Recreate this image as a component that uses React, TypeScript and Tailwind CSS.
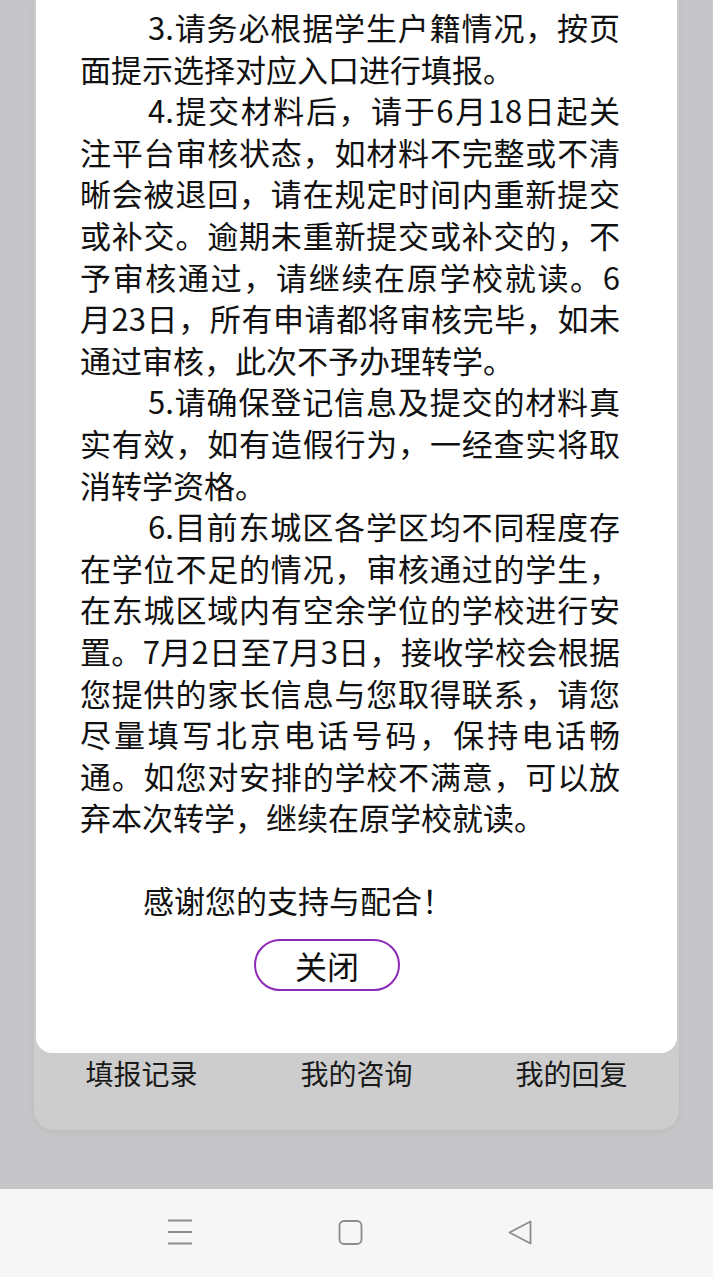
import React from 'react';

type Line = { text: string; indent?: boolean; last?: boolean };

const lines: Line[] = [
  { text: '3.请务必根据学生户籍情况，按页', indent: true },
  { text: '面提示选择对应入口进行填报。', last: true },
  { text: '4.提交材料后，请于6月18日起关', indent: true },
  { text: '注平台审核状态，如材料不完整或不清' },
  { text: '晰会被退回，请在规定时间内重新提交' },
  { text: '或补交。逾期未重新提交或补交的，不' },
  { text: '予审核通过，请继续在原学校就读。6' },
  { text: '月23日，所有申请都将审核完毕，如未' },
  { text: '通过审核，此次不予办理转学。', last: true },
  { text: '5.请确保登记信息及提交的材料真', indent: true },
  { text: '实有效，如有造假行为，一经查实将取' },
  { text: '消转学资格。', last: true },
  { text: '6.目前东城区各学区均不同程度存', indent: true },
  { text: '在学位不足的情况，审核通过的学生，' },
  { text: '在东城区域内有空余学位的学校进行安' },
  { text: '置。7月2日至7月3日，接收学校会根据' },
  { text: '您提供的家长信息与您取得联系，请您' },
  { text: '尽量填写北京电话号码，保持电话畅' },
  { text: '通。如您对安排的学校不满意，可以放' },
  { text: '弃本次转学，继续在原学校就读。', last: true },
];

function NavBar() {
  return (
    <div className="h-[88px] bg-[#f6f6f6] flex items-center justify-center pr-[13px] pb-[2px]">
      <div className="flex items-center gap-[145px]">
        <svg width="26" height="26" viewBox="0 0 26 26" fill="none" stroke="#8c8c8c" strokeWidth="1.8">
          <path d="M1 1.5h24M1 13h24M1 24.5h24" />
        </svg>
        <svg width="25" height="25" viewBox="0 0 25 25" fill="none" stroke="#8c8c8c" strokeWidth="1.8">
          <rect x="1.5" y="1" width="22" height="23" rx="4.5" />
        </svg>
        <svg width="25" height="25" viewBox="0 0 25 25" fill="none" stroke="#8c8c8c" strokeWidth="1.8" strokeLinejoin="round">
          <path d="M22.5 1.5v22L1.5 12.5z" />
        </svg>
      </div>
    </div>
  );
}

export default function App() {
  return (
    <div
      className="w-full h-[1277px] bg-[#c6c6c8] flex flex-col text-[#111]"
      style={{ fontFamily: '"Noto Sans CJK SC", "Noto Sans", sans-serif' }}
    >
      <main className="relative flex-1">
        <div className="mx-[34px] h-[1130px] bg-[#cdcdcd] rounded-b-[20px] shadow-[0_2px_6px_rgba(0,0,0,0.06)] flex flex-col justify-end">
          <div className="grid grid-cols-3 text-center text-[28px] leading-[40px] text-[#1a1a1a] pb-[37px]">
            <span>填报记录</span>
            <span>我的咨询</span>
            <span>我的回复</span>
          </div>
        </div>

        <div className="absolute left-[36px] right-[36px] top-0 h-[1053px] bg-white rounded-b-[16px]">
          <div className="ml-[44px] w-[540px] pt-[6px] text-[31px] leading-[41.6px]">
            {lines.map((line, index) => (
              <div
                key={index}
                className={
                  (line.indent ? 'pl-[68px] ' : '') +
                  (line.last ? 'text-left' : '[text-align-last:justify] text-justify')
                }
              >
                {line.text}
              </div>
            ))}
            <div className="h-[41.6px]" />
            <div className="pl-[63px]">感谢您的支持与配合！</div>
          </div>

          <button
            type="button"
            className="mt-[18px] ml-[218px] w-[146px] h-[52px] rounded-full border-2 border-[#8e2ab8] text-[32px] leading-none text-[#111] flex items-center justify-center"
          >
            关闭
          </button>
        </div>
      </main>

      <NavBar />
    </div>
  );
}
